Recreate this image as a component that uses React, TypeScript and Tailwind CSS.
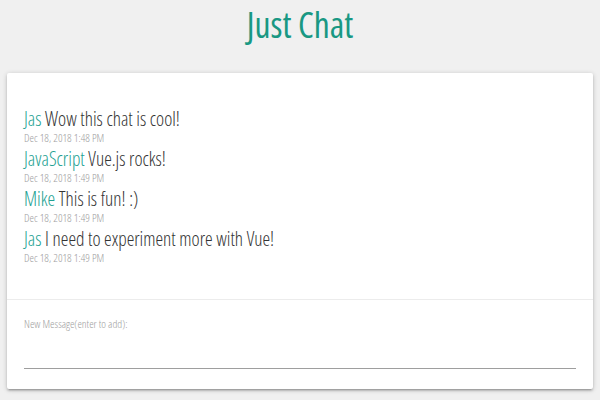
import React from 'react';

interface Message {
  name: string;
  text: string;
  time: string;
}

const MESSAGES: Message[] = [
  { name: 'Jas', text: 'Wow this chat is cool!', time: 'Dec 18, 2018 1:48 PM' },
  { name: 'JavaScript', text: 'Vue.js rocks!', time: 'Dec 18, 2018 1:49 PM' },
  { name: 'Mike', text: 'This is fun! :)', time: 'Dec 18, 2018 1:49 PM' },
  { name: 'Jas', text: 'I need to experiment more with Vue!', time: 'Dec 18, 2018 1:49 PM' },
];

const App: React.FC = () => {
  return (
    <div className="min-h-[400px] bg-[#f0f0f0] font-['Open_Sans',sans-serif] [font-stretch:75%] font-light pb-[10px]">
      <h1 className="text-center text-[35.5px] leading-[49px] font-normal text-[#199883] h-[73px]">Just Chat</h1>

      <div className="mx-[7px] bg-white rounded-[2px] shadow-[0_2px_2px_0_rgba(0,0,0,0.14),0_3px_1px_-2px_rgba(0,0,0,0.12),0_1px_5px_0_rgba(0,0,0,0.2)]">
        <div className="h-[227px] pt-[35px] px-[17px] border-b border-[#ececec]">
          {MESSAGES.map((m, i) => (
            <div key={i} className="pb-[2px]">
              <div className="text-[19.3px] leading-[21px] text-[#333]">
                <span className="text-[#22a192]">{m.name}</span> {m.text}
              </div>
              <div className="text-[11.3px] leading-[17px] text-[#9e9e9e]">{m.time}</div>
            </div>
          ))}
        </div>

        <div className="px-[17px] pt-[17px] pb-[20px]">
          <label className="block text-[11.2px] leading-[14px] text-[#9e9e9e]">New Message(enter to add):</label>
          <input
            type="text"
            className="block w-full h-[38px] bg-transparent outline-none border-b border-[#9e9e9e] text-[16px]"
          />
        </div>
      </div>
    </div>
  );
};

export default App;
